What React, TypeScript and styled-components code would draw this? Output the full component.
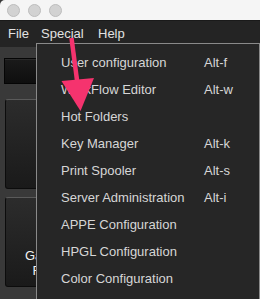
import React from "react";
import styled, { createGlobalStyle } from "styled-components";

const Global = createGlobalStyle`
  html, body { margin: 0; padding: 0; background: #1e1e1e; }
  body { width: 260px; height: 299px; overflow: hidden; font-family: "Liberation Sans", Arial, sans-serif; }
`;

const Window = styled.div`
  position: relative;
  width: 260px;
  height: 299px;
  display: flex;
  flex-direction: column;
  background: #393939;
  overflow: hidden;
`;

const TitleBar = styled.div`
  height: 20px;
  flex: none;
  background: #f5f5f5;
  border-top-left-radius: 5px;
  border-bottom: 1px solid #1a1a1a;
  display: flex;
  align-items: center;
  gap: 8px;
  padding-left: 7px;
`;

const Light = styled.span`
  width: 11px;
  height: 11px;
  border-radius: 50%;
  background: #d2d2d2;
  border: 1px solid #bdbdbd;
`;

const MenuBar = styled.div`
  height: 26px;
  flex: none;
  background: #242424;
  display: flex;
  align-items: flex-start;
  padding: 5px 0 0 8px;
  box-sizing: border-box;
`;

const MenuTitle = styled.span<{ $w: number }>`
  width: ${(p) => p.$w}px;
  font-size: 13px;
  line-height: 15px;
  color: #e2e2e2;
`;

const Content = styled.div`
  flex: 1;
  display: flex;
  flex-direction: column;
  padding: 11px 0 0 4px;
`;

const Field = styled.div`
  width: 160px;
  height: 24px;
  background: linear-gradient(#1a1a1a, #0e0e0e);
  border: 1px solid #050505;
  box-shadow: inset 0 1px 0 #2a2a2a;
`;

const BigButton = styled.div<{ $top: number }>`
  margin-top: ${(p) => p.$top}px;
  margin-left: 1px;
  width: 92px;
  height: 90px;
  box-sizing: border-box;
  border: 1px solid #0c0c0c;
  border-top-color: #5a5a5a;
  border-radius: 3px;
  background: linear-gradient(#2c2c2c, #1a1a1a);
  display: flex;
  flex-direction: column;
  justify-content: flex-end;
  align-items: center;
  padding-bottom: 8px;
  color: #f2f2f2;
  font-size: 13px;
  line-height: 15px;
  text-align: center;
`;

const Dropdown = styled.div`
  position: absolute;
  left: 36px;
  top: 43px;
  width: 224px;
  height: 270px;
  box-sizing: border-box;
  background: #262626;
  border: 1px solid #8a8a8a;
  padding-top: 5px;
  display: flex;
  flex-direction: column;
`;

const Item = styled.div`
  height: 27px;
  display: flex;
  align-items: center;
  font-size: 13px;
  color: #d6d6d6;
  padding-left: 24px;
`;

const Label = styled.span`
  width: 143px;
  white-space: nowrap;
`;

const Shortcut = styled.span`
  white-space: nowrap;
`;

const Arrow = styled.svg`
  position: absolute;
  left: 0;
  top: 0;
  pointer-events: none;
`;

const items: [string, string][] = [
  ["User configuration", "Alt-f"],
  ["WorkFlow Editor", "Alt-w"],
  ["Hot Folders", ""],
  ["Key Manager", "Alt-k"],
  ["Print Spooler", "Alt-s"],
  ["Server Administration", "Alt-i"],
  ["APPE Configuration", ""],
  ["HPGL Configuration", ""],
  ["Color Configuration", ""],
];

export default function App() {
  return (
    <Window>
      <Global />
      <TitleBar>
        <Light />
        <Light />
        <Light />
      </TitleBar>
      <MenuBar>
        <MenuTitle $w={33}>File</MenuTitle>
        <MenuTitle $w={57}>Special</MenuTitle>
        <MenuTitle $w={40}>Help</MenuTitle>
      </MenuBar>
      <Content>
        <Field />
        <BigButton $top={15} />
        <BigButton $top={8}>
          <span>Gang Up</span>
          <span>Forms</span>
        </BigButton>
      </Content>
      <Dropdown>
        {items.map(([l, s]) => (
          <Item key={l}>
            <Label>{l}</Label>
            <Shortcut>{s}</Shortcut>
          </Item>
        ))}
      </Dropdown>
      <Arrow width="260" height="299" viewBox="0 0 260 299">
        <line x1="71.5" y1="38" x2="77.5" y2="84" stroke="#f5336e" strokeWidth="4.5" />
        <polygon points="61.5,81 94,78 80.5,111" fill="#f5336e" />
      </Arrow>
    </Window>
  );
}
